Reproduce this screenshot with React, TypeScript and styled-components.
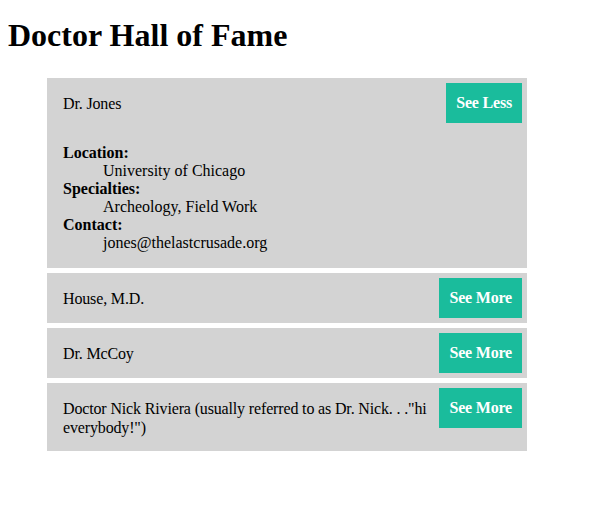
import React, { useState } from "react";
import styled, { createGlobalStyle } from "styled-components";

const Global = createGlobalStyle`
  body {
    margin: 8px;
    font-family: "Liberation Serif", "Times New Roman", serif;
    font-size: 16px;
    color: #000;
    background: #fff;
  }
`;

const Title = styled.h1`
  font-size: 32px;
  font-weight: bold;
  margin: 9px 0 24px 0;
  line-height: 37px;
`;

const List = styled.div`
  display: flex;
  flex-direction: column;
  gap: 5px;
  width: 480px;
  margin-left: 39px;
`;

const Card = styled.div`
  background: #d3d3d3;
`;

const Header = styled.div`
  display: flex;
  align-items: flex-start;
`;

const Name = styled.div`
  flex: 1;
  padding: 16px 0 14px 16px;
  line-height: 19px;
  letter-spacing: -0.15px;
`;

const Button = styled.button`
  flex: none;
  margin: 5px;
  height: 40px;
  padding: 0 10px;
  border: none;
  background: #1abc9c;
  color: #fff;
  font-family: "Liberation Serif", "Times New Roman", serif;
  font-size: 16px;
  font-weight: bold;
  letter-spacing: -0.2px;
  cursor: pointer;
`;

const Details = styled.dl`
  margin: 16px 0;
  padding: 0 16px;
  line-height: 18px;
`;

const Term = styled.dt`
  font-weight: bold;
`;

const Desc = styled.dd`
  margin-left: 40px;
`;

type Doctor = {
  name: string;
  location?: string;
  specialties?: string;
  contact?: string;
};

const doctors: Doctor[] = [
  {
    name: "Dr. Jones",
    location: "University of Chicago",
    specialties: "Archeology, Field Work",
    contact: "jones@thelastcrusade.org",
  },
  { name: "House, M.D." },
  { name: "Dr. McCoy" },
  { name: 'Doctor Nick Riviera (usually referred to as Dr. Nick. . ."hi everybody!")' },
];

function DoctorCard({ doctor, initialOpen }: { doctor: Doctor; initialOpen: boolean }) {
  const [open, setOpen] = useState(initialOpen);
  return (
    <Card>
      <Header>
        <Name>{doctor.name}</Name>
        <Button onClick={() => setOpen(!open)}>{open ? "See Less" : "See More"}</Button>
      </Header>
      {open && (
        <Details>
          <Term>Location:</Term>
          <Desc>{doctor.location}</Desc>
          <Term>Specialties:</Term>
          <Desc>{doctor.specialties}</Desc>
          <Term>Contact:</Term>
          <Desc>{doctor.contact}</Desc>
        </Details>
      )}
    </Card>
  );
}

export default function App() {
  return (
    <>
      <Global />
      <Title>Doctor Hall of Fame</Title>
      <List>
        {doctors.map((d, i) => (
          <DoctorCard key={d.name} doctor={d} initialOpen={i === 0} />
        ))}
      </List>
    </>
  );
}
